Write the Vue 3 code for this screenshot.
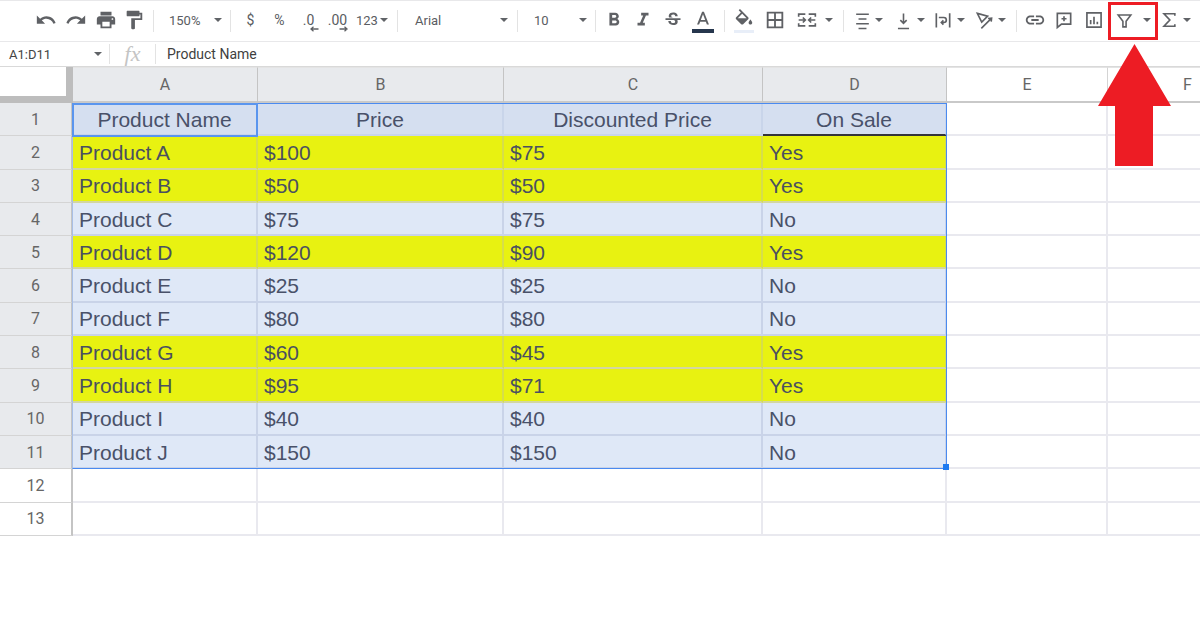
<script setup>
const P = {
  undo: 'M12.5 8c-2.65 0-5.05.99-6.9 2.6L2 7v9h9l-3.62-3.62c1.39-1.16 3.16-1.88 5.12-1.88 3.54 0 6.55 2.31 7.6 5.5l2.37-.78C21.08 11.03 17.15 8 12.5 8z',
  redo: 'M18.4 10.6C16.55 8.99 14.15 8 11.5 8c-4.65 0-8.58 3.03-9.96 7.22L3.9 16c1.05-3.19 4.05-5.5 7.6-5.5 1.95 0 3.73.72 5.12 1.88L13 16h9V7l-3.6 3.6z',
  print: 'M19 8H5c-1.66 0-3 1.34-3 3v6h4v4h12v-4h4v-6c0-1.66-1.34-3-3-3zm-3 11H8v-5h8v5zm3-7c-.55 0-1-.45-1-1s.45-1 1-1 1 .45 1 1-.45 1-1 1zm-1-9H6v4h12V3z',
  paint: 'M18 4V3c0-.55-.45-1-1-1H5c-.55 0-1 .45-1 1v4c0 .55.45 1 1 1h12c.55 0 1-.45 1-1V6h1v4H9v11c0 .55.45 1 1 1h2c.55 0 1-.45 1-1v-9h8V4h-3z',
  bold: 'M15.6 10.79c.97-.67 1.65-1.77 1.65-2.79 0-2.26-1.75-4-4-4H7v14h7.04c2.09 0 3.71-1.7 3.71-3.79 0-1.52-.86-2.82-2.15-3.42zM10 6.5h3c.83 0 1.5.67 1.5 1.5s-.67 1.5-1.5 1.5h-3v-3zm3.5 9H10v-3h3.5c.83 0 1.5.67 1.5 1.5s-.67 1.5-1.5 1.5z',
  italic: 'M10 4v3h2.21l-3.42 8H6v3h8v-3h-2.21l3.42-8H18V4z',
  strike: 'M6.85 7.08C6.85 4.37 9.45 3 12.24 3c1.64 0 3 .49 3.9 1.28.77.65 1.46 1.73 1.46 3.24h-3.01c0-.31-.05-.59-.15-.85-.29-.86-1.2-1.28-2.25-1.28-1.86 0-2.34 1.02-2.34 1.7 0 .48.25.88.74 1.21.38.25.77.48 1.41.7H7.39c-.21-.34-.54-.89-.54-1.92zM21 12v-2H3v2h9.62c1.15.45 1.96.75 1.96 1.97 0 1-.81 1.67-2.28 1.67-1.54 0-2.93-.54-2.93-2.51H6.4c0 .55.08 1.13.24 1.58.81 2.29 3.29 3.3 5.67 3.3 2.27 0 5.3-.89 5.3-4.05 0-.3-.01-1.16-.48-1.94H21V12z',
  color: 'M11 3L5.5 17h2.25l1.12-3h6.25l1.12 3h2.25L13 3h-2zm-1.38 9L12 5.67 14.38 12H9.62z',
  fill: 'M16.56 8.94L7.62 0 6.21 1.41l2.38 2.38-5.15 5.15c-.59.59-.59 1.54 0 2.12l5.5 5.5c.29.29.68.44 1.06.44s.77-.15 1.06-.44l5.5-5.5c.59-.58.59-1.53 0-2.12zM5.21 10L10 5.21 14.79 10H5.21zM19 11.5s-2 2.17-2 3.5c0 1.1.9 2 2 2s2-.9 2-2c0-1.33-2-3.5-2-3.5z',
  borders: 'M3 3v18h18V3H3zm8 16H5v-6h6v6zm0-8H5V5h6v6zm8 8h-6v-6h6v6zm0-8h-6V5h6v6z',
  link: 'M3.9 12c0-1.71 1.39-3.1 3.1-3.1h4V7H7c-2.76 0-5 2.24-5 5s2.24 5 5 5h4v-1.9H7c-1.71 0-3.1-1.39-3.1-3.1zM8 13h8v-2H8v2zm9-6h-4v1.9h4c1.71 0 3.1 1.39 3.1 3.1s-1.39 3.1-3.1 3.1h-4V17h4c2.76 0 5-2.24 5-5s-2.24-5-5-5z',
  sigma: 'M19 7V4.500H6L13 12 6 19.500H19V17',
  merge: 'M2 8V5h8M14 5h8v3M2 16v3h8M14 19h8v-3M2 12h7M15 12h7M7 9l3 3-3 3M17 9l-3 3 3 3',
  align: 'M4 4h16M7 10h10M4 16h16M7 22h10',
  valign: 'M5 22h14M12 3v12M8 11.500l4 4 4-4',
  wrap: 'M4 4v17M20 4v17M7 9h6a3 3 0 0 1 0 6h-3M12.500 12.500L10 15l2.500 2.500',
  rotate: 'M3 3l13 3.500-7.500 7.500zM8 22L21 9M16.500 9.500L21 9l-.5 4.500',
  comment: 'M4 4h16v13H9l-5 4zM12 7.500v6M9 10.500h6',
  chart: 'M3.500 3.500h17v17h-17zM8 17v-5M12 17V8M16 17v-3',
  filter: 'M4 5h16l-6 8v7h-4v-7z'
}
const stroked = new Set(['merge', 'align', 'valign', 'wrap', 'rotate', 'comment', 'chart', 'filter', 'sigma'])

const tools = [
  { sp: 31 },
  { w: 30, i: 'undo' }, { w: 30, i: 'redo' }, { w: 29, i: 'print' }, { w: 28, i: 'paint' },
  { sp: 5 }, { sep: 1 },
  { w: 76, sel: '150%', pl: 15, pr: 8 },
  { sep: 1 }, { sp: 5 },
  { w: 29, t: '$' }, { w: 29, t: '%' },
  { w: 29, t: '.0', arrow: 'left' }, { w: 29, t: '.00', arrow: 'right' },
  { w: 40, sel: '123', pl: 4, pr: 4 },
  { sp: 5 }, { sep: 1 },
  { w: 119, sel: 'Arial', pl: 17, pr: 9 },
  { sep: 1 },
  { w: 77, sel: '10', pl: 16, pr: 8 },
  { sep: 1 }, { sp: 4 },
  { w: 28, i: 'bold' }, { w: 30, i: 'italic' }, { w: 30, i: 'strike', s: 20 },
  { w: 30, i: 'color', bar: 'dark' },
  { sp: 6 }, { sep: 1 }, { sp: 5 },
  { w: 28, i: 'fill', bar: 'light' }, { w: 34, i: 'borders' }, { w: 30, i: 'merge', s: 20 }, { caret: 14 },
  { sp: 7 }, { sep: 1 }, { sp: 7 },
  { w: 22, i: 'align', s: 19 }, { caret: 12 }, { sp: 6 },
  { w: 24, i: 'valign', s: 19 }, { caret: 12 }, { sp: 4 },
  { w: 24, i: 'wrap', s: 20 }, { caret: 12 }, { sp: 5 },
  { w: 24, i: 'rotate', s: 19 }, { caret: 12 }, { sp: 8 },
  { sep: 1 }, { sp: 4 },
  { w: 28, i: 'link' }, { w: 30, i: 'comment', s: 20 }, { w: 30, i: 'chart', s: 20 }, { w: 30, i: 'filter', s: 19 },
  { sp: 2 }, { caret: 12 }, { sp: 4 },
  { w: 24, i: 'sigma', s: 20 }, { caret: 12 }
]

const columns = ['A', 'B', 'C', 'D', 'E', 'F']
const products = [
  ['Product A', '$100', '$75', 'Yes'],
  ['Product B', '$50', '$50', 'Yes'],
  ['Product C', '$75', '$75', 'No'],
  ['Product D', '$120', '$90', 'Yes'],
  ['Product E', '$25', '$25', 'No'],
  ['Product F', '$80', '$80', 'No'],
  ['Product G', '$60', '$45', 'Yes'],
  ['Product H', '$95', '$71', 'Yes'],
  ['Product I', '$40', '$40', 'No'],
  ['Product J', '$150', '$150', 'No']
]
</script>

<template>
  <div class="page">
    <div class="toolbar">
      <template v-for="(t, n) in tools" :key="n">
        <span v-if="t.sp" class="spacer" :style="{ width: t.sp + 'px' }"></span>
        <span v-else-if="t.sep" class="sep"></span>
        <span v-else-if="t.caret" class="tool" :style="{ width: t.caret + 'px' }"><i class="caret"></i></span>
        <span
          v-else-if="t.sel"
          class="select"
          :style="{ width: t.w + 'px', paddingLeft: t.pl + 'px', paddingRight: t.pr + 'px' }"
        >
          <span>{{ t.sel }}</span><i class="caret"></i>
        </span>
        <span v-else class="tool" :style="{ width: t.w + 'px' }">
          <template v-if="t.t">
            <span class="tool-text">{{ t.t }}</span>
            <svg v-if="t.arrow" class="num-arrow" width="9" height="6" viewBox="0 0 9 6">
              <path v-if="t.arrow === 'left'" d="M8.500 3H2M3.500 .8L1 3l2.500 2.200" />
              <path v-else d="M.5 3H7M5.500 .8L8 3 5.500 5.200" />
            </svg>
          </template>
          <svg v-else :width="t.s || 22" :height="t.s || 22" viewBox="0 0 24 24">
            <path :d="P[t.i]" :class="stroked.has(t.i) ? 'stroke' : 'solid'" />
          </svg>
          <i v-if="t.bar" class="bar" :class="t.bar"></i>
        </span>
      </template>
    </div>

    <div class="formula">
      <div class="namebox"><span>A1:D11</span><i class="caret"></i></div>
      <span class="fsep"></span>
      <span class="fx">fx</span>
      <span class="fsep"></span>
      <span class="ftext">Product Name</span>
    </div>

    <div class="sheet">
      <div class="corner"></div>
      <div v-for="(c, i) in columns" :key="c" class="colhead" :class="{ on: i < 4 }">{{ c }}</div>

      <div class="rowhead on">1</div>
      <div class="cell head center">Product Name</div>
      <div class="cell head center">Price</div>
      <div class="cell head center">Discounted Price</div>
      <div class="cell head center last">On Sale</div>
      <div class="cell"></div><div class="cell"></div>

      <template v-for="(row, r) in products" :key="r">
        <div class="rowhead on">{{ r + 2 }}</div>
        <div
          v-for="(v, c) in row"
          :key="c"
          class="cell"
          :class="row[3] === 'Yes' ? 'yellow' : 'band'"
        >{{ v }}</div>
        <div class="cell"></div><div class="cell"></div>
      </template>

      <template v-for="r in [12, 13]" :key="r">
        <div class="rowhead">{{ r }}</div>
        <div v-for="c in 6" :key="c" class="cell"></div>
      </template>

      <div class="selection"></div>
      <div class="active"></div>
      <div class="handle"></div>
    </div>

    <div class="redbox"></div>
    <svg class="redarrow" width="76" height="125" viewBox="0 0 76 125">
      <path d="M37.500 1L74 63H56V123H18V63H1z" />
    </svg>
  </div>
</template>

<style>
html, body { margin: 0; background: #fff; }
</style>

<style scoped>
.page {
  position: relative;
  width: 1200px;
  height: 617px;
  overflow: hidden;
  background: #fff;
  font-family: "Liberation Sans", Arial, sans-serif;
}
.toolbar {
  height: 40px;
  box-sizing: content-box;
  display: flex;
  align-items: center;
  border-top: 1px solid #e8e8ea;
  border-bottom: 1px solid #e8e8ea;
  font-family: Roboto, "Liberation Sans", sans-serif;
  color: #5a5d62;
  font-size: 13px;
}
.spacer { flex: none; height: 1px; }
.sep {
  flex: none;
  width: 1px;
  height: 22px;
  margin-top: -1px;
  background: #e3e3e3;
}
.tool {
  position: relative;
  flex: none;
  height: 40px;
  display: flex;
  align-items: center;
  justify-content: center;
  padding-bottom: 2px;
  box-sizing: border-box;
}
.tool svg { flex: none; }
.solid { fill: #5f6165; }
.stroke { fill: none; stroke: #5f6165; stroke-width: 2; }
.tool-text { font-size: 14px; }
.num-arrow {
  position: absolute;
  left: 50%;
  top: 25px;
  margin-left: 1px;
}
.num-arrow path { fill: none; stroke: #5f6165; stroke-width: 1.3; }
.bar {
  position: absolute;
  height: 4px;
  top: 28px;
  left: 4px;
  right: 4px;
}
.bar.dark { background: #26364d; }
.bar.light { top: 29px; height: 3px; background: #e8eef8; }
.select {
  flex: none;
  height: 40px;
  display: flex;
  align-items: center;
  justify-content: space-between;
  padding-bottom: 2px;
  box-sizing: border-box;
}
.caret {
  flex: none;
  width: 0;
  height: 0;
  border-left: 4.5px solid transparent;
  border-right: 4.500px solid transparent;
  border-top: 4.500px solid #606367;
}
.formula {
  height: 24px;
  display: flex;
  align-items: center;
  border-bottom: 1px solid #d9d9d9;
}
.namebox {
  flex: none;
  width: 109px;
  box-sizing: border-box;
  padding: 0 7px 0 9px;
  display: flex;
  align-items: center;
  justify-content: space-between;
  font-size: 13px;
  color: #444;
  font-family: Roboto, "Liberation Sans", sans-serif;
}
.fsep { flex: none; width: 1px; height: 20px; background: #e3e3e3; }
.fx {
  flex: none;
  width: 45px;
  text-align: center;
  font: italic 22px/24px "Liberation Serif", serif;
  color: #c4c4c4;
}
.ftext {
  padding-left: 11px;
  font: 14px Roboto, "Liberation Sans", sans-serif;
  color: #3f3f3f;
}
.sheet {
  position: relative;
  display: grid;
  grid-template-columns: 73px 185px 246px 259px 184px 161px 160px;
  grid-template-rows: 36px repeat(13, 33.300px);
  width: 1200px;
  color: #495169;
  font-size: 21px;
}
.corner {
  box-sizing: border-box;
  background: #fff;
  border-right: 7px solid #bdbdbd;
  border-bottom: 7px solid #bdbdbd;
}
.colhead {
  display: flex;
  align-items: center;
  justify-content: center;
  box-sizing: border-box;
  border-right: 1px solid #d4d4d4;
  border-bottom: 2px solid #c9c9c9;
  border-top: 1px solid #e4e4e4;
  font-size: 16px;
  color: #666;
  font-family: Roboto, "Liberation Sans", sans-serif;
}
.colhead.on { background: #e8eaed; border-right-color: #c4c4c4; }
.rowhead {
  display: flex;
  align-items: center;
  justify-content: center;
  box-sizing: border-box;
  border-right: 2px solid #c4c4c4;
  border-bottom: 1px solid #d4d4d4;
  font-size: 16px;
  color: #666;
  font-family: Roboto, "Liberation Sans", sans-serif;
}
.rowhead.on { background: #e8eaed; }
.cell {
  display: flex;
  align-items: center;
  box-sizing: border-box;
  padding: 2px 0 0 6px;
  border-right: 2px solid #e9e9ef;
  border-bottom: 2px solid #e9e9ef;
  white-space: nowrap;
}
.cell.head { background: #d5dff0; border-color: #c9d5ea; }
.cell.center { justify-content: center; padding-left: 0; }
.cell.last { border-bottom-color: #33343a; }
.cell.band { background: #dfe8f7; border-color: #c9d3e8; }
.cell.yellow { background: #e8f211; border-right-color: #d6de4a; border-bottom-color: #d3d6a0; color: #4a5060; }
.selection {
  position: absolute;
  left: 72px;
  top: 36px;
  width: 875px;
  height: 366px;
  box-sizing: border-box;
  border: 1px solid #4a8af0;
  border-left-color: #a9bfe6;
}
.active {
  position: absolute;
  left: 72px;
  top: 36px;
  width: 186px;
  height: 34px;
  box-sizing: border-box;
  border: 2px solid #5a95ee;
}
.handle {
  position: absolute;
  left: 943px;
  top: 397px;
  width: 6px;
  height: 6px;
  background: #1f7bf0;
}
.redbox {
  position: absolute;
  left: 1108px;
  top: 2px;
  width: 50px;
  height: 38px;
  box-sizing: border-box;
  border: 3px solid #ed1c24;
}
.redarrow {
  position: absolute;
  left: 1097px;
  top: 43px;
}
.redarrow path { fill: #ed1c24; }
</style>
